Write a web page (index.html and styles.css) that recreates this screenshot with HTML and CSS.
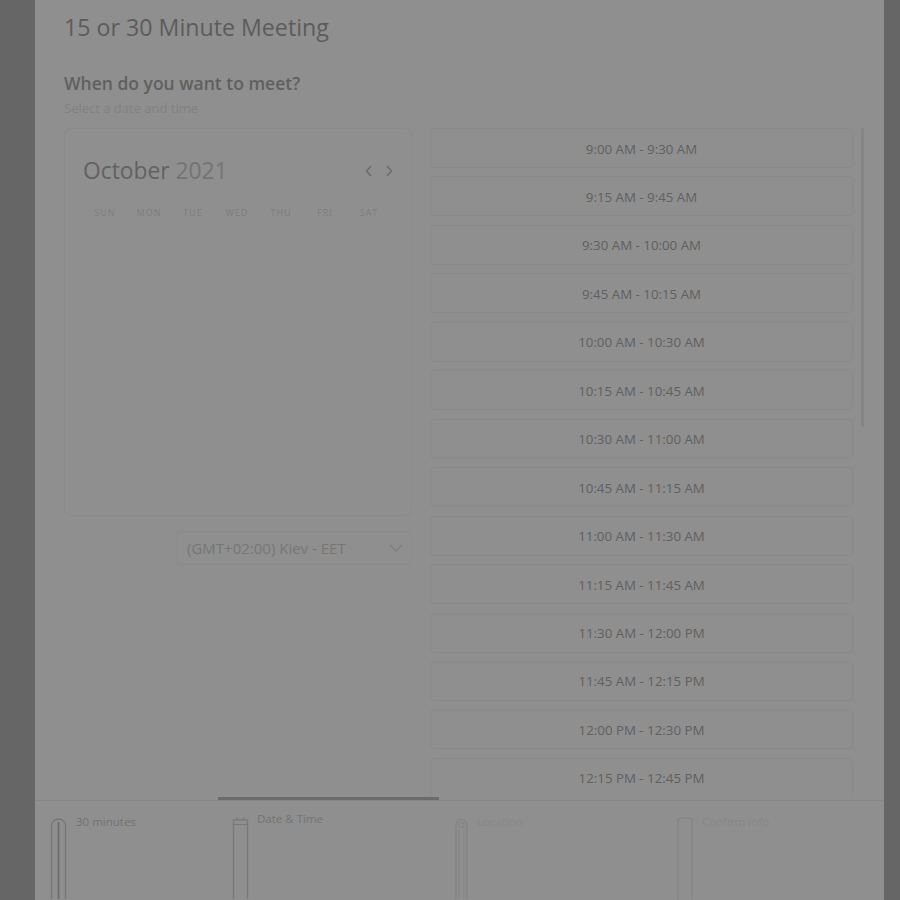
FILE: index.html
```html
<!DOCTYPE html>
<html lang="en">
<head>
<meta charset="utf-8">
<title>15 or 30 Minute Meeting</title>
<link rel="stylesheet" href="styles.css">
</head>
<body>
<div class="modal">
  <h1 class="title">15 or 30 Minute Meeting</h1>
  <h2 class="question">When do you want to meet?</h2>
  <p class="sub">Select a date and time</p>

  <div class="picker">
    <div class="left">
      <div class="cal">
        <div class="cal-head">
          <span class="month">October <span class="year">2021</span></span>
          <div class="nav">
            <svg width="8" height="12" viewBox="0 0 8 12"><path d="M6 1 L1.5 6 L6 11" fill="none" stroke="#6a6a6a" stroke-width="1.4"/></svg>
            <svg width="8" height="12" viewBox="0 0 8 12"><path d="M2 1 L6.5 6 L2 11" fill="none" stroke="#6a6a6a" stroke-width="1.4"/></svg>
          </div>
        </div>
        <div class="weekdays">
          <span>SUN</span><span>MON</span><span>TUE</span><span>WED</span><span>THU</span><span>FRI</span><span>SAT</span>
        </div>
      </div>
      <div class="tz">
        <span>(GMT+02:00) Kiev - EET</span>
        <svg width="14" height="8" viewBox="0 0 14 8"><path d="M1 1 L7 7 L13 1" fill="none" stroke="#7c7c7c" stroke-width="1.2"/></svg>
      </div>
    </div>

    <div class="slots">
      <div class="slot">9:00 AM - 9:30 AM</div>
      <div class="slot">9:15 AM - 9:45 AM</div>
      <div class="slot">9:30 AM - 10:00 AM</div>
      <div class="slot">9:45 AM - 10:15 AM</div>
      <div class="slot">10:00 AM - 10:30 AM</div>
      <div class="slot">10:15 AM - 10:45 AM</div>
      <div class="slot">10:30 AM - 11:00 AM</div>
      <div class="slot">10:45 AM - 11:15 AM</div>
      <div class="slot">11:00 AM - 11:30 AM</div>
      <div class="slot">11:15 AM - 11:45 AM</div>
      <div class="slot">11:30 AM - 12:00 PM</div>
      <div class="slot">11:45 AM - 12:15 PM</div>
      <div class="slot">12:00 PM - 12:30 PM</div>
      <div class="slot">12:15 PM - 12:45 PM</div>
    </div>
    <div class="scrollbar"></div>
  </div>

  <nav class="tabs">
    <div class="tab">
      <svg class="ico" width="17" height="86" viewBox="0 0 17 86"><path d="M1.5 86 V9 A7 7 0 0 1 15.5 9 V86" fill="none" stroke="#767676" stroke-width="1.3"/><path d="M8.5 5 V86" stroke="#696969" stroke-width="1.6"/></svg>
      <span class="label">30 minutes</span>
    </div>
    <div class="tab active">
      <svg class="ico" width="17" height="86" viewBox="0 0 17 86"><rect x="1.5" y="3" width="14" height="90" fill="none" stroke="#787878" stroke-width="1.3"/><path d="M1.5 7.5 H15.5 M5 0 V3 M12 0 V3" stroke="#787878" stroke-width="1.2"/></svg>
      <span class="label">Date &amp; Time</span>
    </div>
    <div class="tab disabled">
      <svg class="ico" width="13" height="86" viewBox="0 0 13 86"><path d="M1 86 V8 A5.5 5.5 0 0 1 12 8 V86" fill="none" stroke="#828282" stroke-width="1.2"/><path d="M4 12 V86 M9 12 V86" stroke="#858585" stroke-width="1.1"/><circle cx="6.5" cy="8" r="2.5" fill="none" stroke="#838383" stroke-width="1.1"/></svg>
      <span class="label">Location</span>
    </div>
    <div class="tab disabled">
      <svg class="ico" width="16" height="86" viewBox="0 0 16 86"><rect x="1" y="1" width="14" height="95" rx="2" fill="none" stroke="#848484" stroke-width="1.2"/></svg>
      <span class="label">Confirm info</span>
    </div>
  </nav>
</div>
</body>
</html>
```
FILE: styles.css
```css
html, body {
  margin: 0;
  padding: 0;
  background: #666666;
  height: 900px;
  overflow: hidden;
}

.modal {
  margin: 0 16px 0 35px;
  height: 900px;
  background: #8f8f8f;
  box-sizing: border-box;
  padding-top: 11px;
  font-family: "Open Sans", "Noto Sans", sans-serif;
  overflow: hidden;
}

.title {
  margin: 0 0 0 29px;
  font-size: 23.2px;
  line-height: 32px;
  font-weight: 400;
  color: #5c5c5c;
}

.question {
  margin: 28px 0 0 29px;
  font-size: 17.5px;
  line-height: 24px;
  font-weight: 600;
  color: #606060;
}

.sub {
  margin: 4px 0 0 29px;
  font-size: 13px;
  line-height: 18px;
  color: #818181;
}

.picker {
  display: flex;
  align-items: flex-start;
  margin: 11px 0 0 29px;
  height: 669px;
  overflow: hidden;
}

.left {
  width: 348px;
  display: flex;
  flex-direction: column;
}

.cal {
  height: 388px;
  box-sizing: border-box;
  border: 1px solid #8b8b8b;
  border-radius: 6px;
  padding: 26px 19px 0 18px;
}

.cal-head {
  display: flex;
  align-items: center;
  justify-content: space-between;
}

.month {
  font-size: 22.8px;
  line-height: 32px;
  color: #626262;
}

.year {
  color: #747474;
}

.nav {
  display: flex;
  gap: 12px;
  margin-right: -1px;
}

.weekdays {
  display: grid;
  grid-template-columns: repeat(7, 44px);
  margin-top: 20px;
  font-size: 9px;
  line-height: 12px;
  letter-spacing: 1px;
  color: #7d7d7d;
  text-align: center;
}

.tz {
  margin: 15px 0 0 auto;
  width: 235px;
  height: 34px;
  box-sizing: border-box;
  border: 1px solid #8b8b8b;
  border-radius: 3px;
  padding: 0 8px 0 9px;
  display: flex;
  align-items: center;
  justify-content: space-between;
  font-size: 15px;
  color: #767676;
}

.slots {
  margin-left: 18px;
  width: 423px;
  display: flex;
  flex-direction: column;
  gap: 8.46px;
}

.slot {
  height: 40px;
  flex: none;
  box-sizing: border-box;
  border: 1px solid #8a8a8a;
  border-radius: 4px;
  display: flex;
  align-items: center;
  justify-content: center;
  padding-top: 1px;
  font-size: 13.3px;
  color: #606060;
}

.scrollbar {
  margin-left: 8px;
  width: 3px;
  height: 299px;
  border-radius: 2px;
  background: #858585;
}

.tabs {
  display: grid;
  grid-template-columns: 183px 221px 222px 223px;
  height: 102px;
  background: linear-gradient(#888888, #888888) no-repeat 0 3px / 100% 1px;
}

.tab {
  display: flex;
  align-items: flex-start;
  gap: 9px;
  padding: 12px 0 0 15px;
  border-top: 3px solid transparent;
  overflow: hidden;
}

.tab.active {
  border-top-color: #6b6b6b;
  padding-left: 14px;
  gap: 8px;
}

.tab.disabled {
  padding-left: 16px;
}

.ico {
  flex: none;
  margin-top: 5px;
}

.label {
  margin-top: 2px;
  font-size: 11.5px;
  line-height: 16px;
  color: #717171;
}

.tab.active .label {
  margin-top: -1px;
  color: #737373;
}

.tab.disabled .label {
  color: #878787;
}
```
